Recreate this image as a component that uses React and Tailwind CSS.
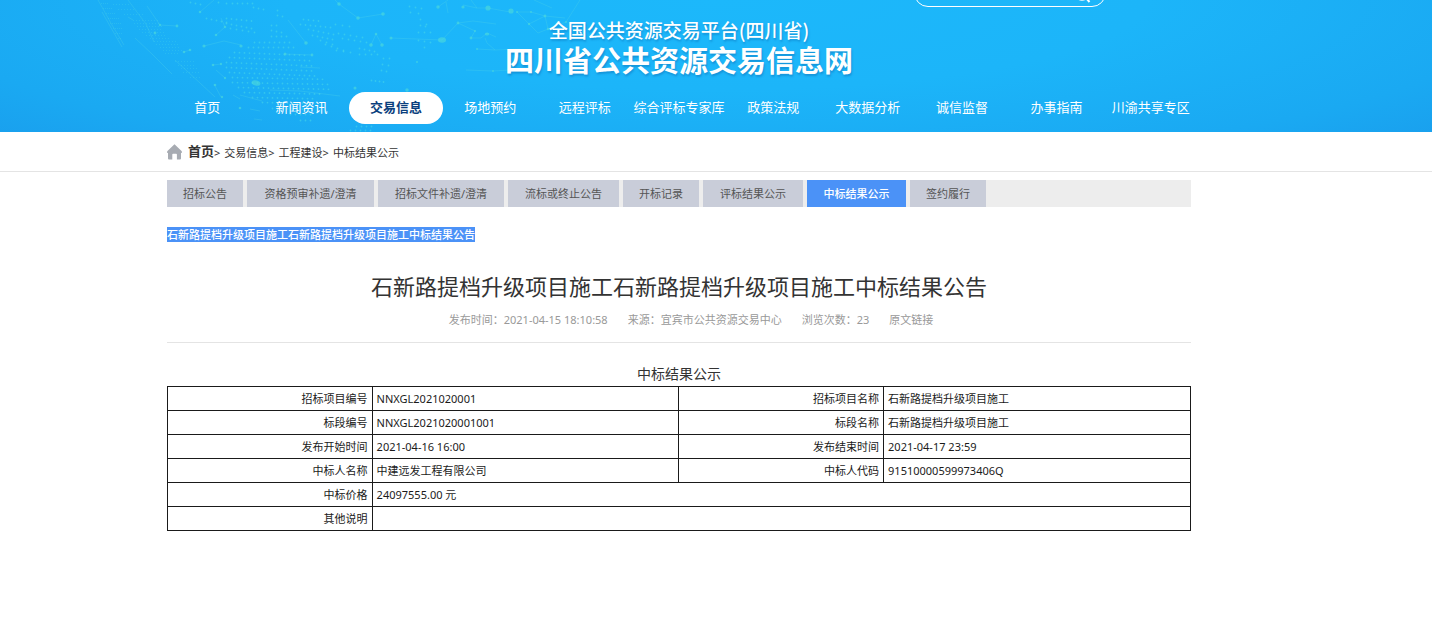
import React from "react";

const FONT = "font-['Noto_Sans','Noto_Sans_CJK_SC',sans-serif]";

const NAV = [
  "首页",
  "新闻资讯",
  "交易信息",
  "场地预约",
  "远程评标",
  "综合评标专家库",
  "政策法规",
  "大数据分析",
  "诚信监督",
  "办事指南",
  "川渝共享专区",
];

const TABS = [
  { label: "招标公告", width: "min-w-[76px]" },
  { label: "资格预审补遗/澄清", width: "min-w-[127px]" },
  { label: "招标文件补遗/澄清", width: "min-w-[126px]" },
  { label: "流标或终止公告", width: "min-w-[111px]" },
  { label: "开标记录", width: "min-w-[76px]" },
  { label: "评标结果公示", width: "min-w-[100px]" },
  { label: "中标结果公示", width: "min-w-[99px]", active: true },
  { label: "签约履行", width: "min-w-[76px]" },
];

const ROWS = [
  ["招标项目编号", "NNXGL2021020001", "招标项目名称", "石新路提档升级项目施工"],
  ["标段编号", "NNXGL2021020001001", "标段名称", "石新路提档升级项目施工"],
  ["发布开始时间", "2021-04-16 16:00", "发布结束时间", "2021-04-17 23:59"],
  ["中标人名称", "中建远发工程有限公司", "中标人代码", "91510000599973406Q"],
  ["中标价格", "24097555.00 元"],
  ["其他说明", ""],
];

/* Rows of evenly spaced dots: [startX, y, count, stepX, stepY] */
const DOT_ROWS = [
  [190, 2, 3, 5, 1],
  [218, 2, 2, 8, 1],
  [232, 3, 5, 5, 0],
  [253, 7, 3, 5, 1],
  [206, 18, 5, 5, 1],
  [226, 18, 6, 5, 0.5],
  [226, 23, 6, 5, 1],
  [230, 28, 5, 6, 1],
  [303, 19, 4, 5, 0.5],
  [300, 24, 7, 5, 0.5],
  [308, 29, 6, 5, 1],
  [312, 35, 5, 5, 1],
  [320, 40, 3, 6, 2],
  [335, 24, 3, 7, 1],
  [338, 33, 5, 6, 1],
  [342, 38, 5, 6, 1],
  [325, 44, 4, 6, 2],
  [336, 50, 3, 7, 1],
  [359, 48, 4, 5, 1],
  [359, 54, 4, 6, 0],
  [383, 58, 2, 6, 0],
  [382, 64, 2, 6, 1],
  [381, 70, 2, 5, 1],
  [371, 80, 4, 4, 0.5],
  [409, 6, 3, 6, 1],
  [410, 12, 2, 8, 1],
  [420, 19, 2, 6, 5],
  [420, 25, 2, 5, 1],
  [418, 32, 3, 6, 0],
  [418, 40, 3, 6, 1],
  [424, 47, 1, 5, 0],
  [277, 10, 1, 5, 0],
  [277, 15, 2, 5, 1],
  [271, 25, 2, 5, 0],
  [271, 30, 3, 5, 1],
  [271, 36, 4, 5, 0],
  [254, 42, 8, 5, 0],
  [248, 47, 10, 5, 0],
  [234, 52, 15, 5, 0.2],
  [229, 57, 17, 5, 0.2],
  [226, 62, 18, 5, 0.2],
  [226, 67, 18, 5, 0.2],
  [229, 72, 18, 5, 0.2],
  [232, 77, 19, 5, 0.1],
  [232, 82, 20, 5, 0.1],
  [238, 87, 19, 5, 0.1],
  [244, 92, 16, 5, 0.1],
  [252, 97, 13, 5, 0.1],
  [262, 102, 10, 5, 0.1],
  [272, 108, 8, 5, 0.1],
  [290, 114, 5, 5, 0],
  [300, 120, 3, 5, 0],
  [356, 126, 4, 5, 0],
  [350, 130, 5, 5, 0],
];

const FINE_ROWS = [
  [101, 3, 4, 2], [103, 8, 5, 2], [106, 13, 5, 2], [108, 18, 6, 2], [110, 23, 6, 2],
  [113, 28, 5, 2], [115, 33, 4, 2], [118, 38, 2, 2],
  [113, 4, 6, 3], [118, 9, 6, 3], [124, 14, 7, 3],
  [133, 20, 9, 3], [134, 23, 9, 3], [137, 26, 9, 3], [139, 29, 8, 3], [142, 32, 8, 3],
  [146, 35, 7, 3], [150, 38, 7, 3], [154, 41, 8, 3], [156, 44, 8, 3], [160, 47, 7, 3],
  [163, 50, 7, 3], [165, 53, 5, 3], [175, 61, 7, 3], [178, 65, 6, 3], [181, 68, 6, 3],
  [183, 72, 6, 3], [190, 77, 4, 3],
];

const LINKS = [
  "M128 17L133 20M147 6L160 25L177 26",
  "M200 12L214 0M216 35L225 27L221 18",
  "M204 46L224 41L241 45M184 52L190 50",
  "M213 65L221 64M216 70L225 78M214 84L221 97",
  "M288 20L306 43M285 54L312 55M300 67L320 68",
  "M335 0L339 4L358 18L383 14",
  "M371 45L376 34L382 45M391 38L442 40L458 23L473 21L496 24M458 23L475 31L471 38L481 38L487 33L496 37",
  "M438 7L448 0M446 2L448 13M463 5L477 8L488 8M471 0L477 8M488 8L510 12",
  "M517 12L531 12L545 16L565 18M517 12L529 24L545 16L548 29L566 22L580 0M548 29L538 33L529 24M534 0L552 8",
  "M477 49L495 50L520 49M485 38L487 43L495 50M466 70L493 71L510 70",
  "M135 38L152 54L172 74M175 60L200 83L215 97M102 12L122 47",
  "M270 90L300 91L340 96M240 95L262 101M250 109L260 111M254 119L262 120M233 95L240 99",
  "M98 0L112 25L124 45M128 0L146 24L154 42",
];

const NODES = [
  [200, 12, 1.3], [160, 25, 1.2], [177, 26, 1.4], [155, 33, 1.4], [216, 35, 1.3], [225, 27, 1.3],
  [204, 46, 1.6], [241, 46, 1.6], [184, 52, 1.3], [190, 50, 1.3], [213, 65, 1.3], [221, 64, 1.2],
  [225, 78, 1.2], [215, 85, 1.3], [222, 97, 1.2], [306, 43, 1.8], [285, 54, 1.5], [312, 55, 1.4],
  [339, 4, 1.8], [358, 18, 1.8], [383, 14, 1.8], [371, 45, 1.8], [376, 34, 1.3], [382, 45, 1.8],
  [391, 38, 1.5], [458, 23, 1.4], [438, 7, 1.7], [471, 38, 1.4], [463, 7, 1.6], [475, 31, 1.1],
  [517, 12, 1], [531, 12, 1], [545, 16, 1.4], [529, 24, 1.2], [548, 29, 1.2], [566, 22, 1.1],
  [493, 71, 1], [477, 49, 1], [417, 62, 1], [240, 108, 1.3], [355, 88, 1.5], [407, 90, 1.7],
];

function NetworkPattern() {
  return (
    <svg
      className="pointer-events-none absolute top-0 left-0"
      width="620"
      height="132"
      viewBox="0 0 620 132"
      aria-hidden="true"
    >
      <g fill="#48d8e8">
        <g fillOpacity="0.55">
          {DOT_ROWS.map(([x, y, n, dx, dy], r) =>
            Array.from({ length: n }, (_, i) => (
              <circle key={`${r}-${i}`} cx={x + i * dx + 0.5} cy={y + i * dy + 0.5} r="0.9" />
            )),
          )}
        </g>
        <g fillOpacity="0.28">
          {FINE_ROWS.map(([x, y, n, dx], r) =>
            Array.from({ length: n }, (_, i) => (
              <rect key={`${r}-${i}`} x={x + i * dx} y={y} width="1" height="1" />
            )),
          )}
        </g>
      </g>
      <g fill="none" stroke="#52d6e6" strokeOpacity="0.35" strokeWidth="0.8">
        {LINKS.map((d) => (
          <path key={d} d={d} />
        ))}
      </g>
      <g fill="#4bd8dc" fillOpacity="0.65">
        {NODES.map(([x, y, r]) => (
          <circle key={`${x}-${y}`} cx={x} cy={y} r={r} />
        ))}
        <ellipse cx="256" cy="83" rx="4.5" ry="2.5" transform="rotate(15 256 83)" />
        <ellipse cx="442" cy="40" rx="4" ry="2.8" />
        <circle cx="488" cy="8" r="2.6" />
        <circle cx="511" cy="11" r="2.6" />
        <ellipse cx="487" cy="34" rx="2.2" ry="1.6" />
      </g>
    </svg>
  );
}

function Header() {
  return (
    <header className="relative overflow-hidden bg-[radial-gradient(ellipse_75%_170%_at_50%_0%,#1cb8fb_0%,#1cb5f9_40%,#1aa9f2_75%,#199aeb_100%)] pr-[74px]">
      <NetworkPattern />
      <div className="relative mx-auto max-w-[1038px]">
        <div className="flex h-[7px] items-end justify-end overflow-hidden pr-[92px]">
          <form className="flex h-7 w-48 shrink-0 items-center rounded-full border border-white px-3" role="search">
            <input type="search" aria-label="搜索" className="min-w-0 flex-1 bg-transparent text-xs text-white outline-none" />
            <button type="submit" aria-label="搜索" className="h-6 text-white">
              <svg width="18" height="24" viewBox="0 0 18 24" fill="none" stroke="currentColor" strokeWidth="1.6">
                <circle cx="7" cy="12" r="7" />
                <path d="M11.5 17.5L14.5 21" strokeWidth="2" />
              </svg>
            </button>
          </form>
        </div>
        <div className="flex flex-col items-center pt-[11px] text-white [text-shadow:1px_2px_2px_rgba(10,90,160,0.35)]">
          <p className="font-['Noto_Sans_CJK_SC',sans-serif] text-[19px] leading-6 font-medium">
            全国公共资源交易平台(四川省)
          </p>
          <h1 className="font-['Noto_Sans_CJK_SC',sans-serif] text-[29px] leading-[34px] font-bold">
            四川省公共资源交易信息网
          </h1>
        </div>
        <nav className="mt-4 pb-2">
          <ul className="grid grid-cols-11">
            {NAV.map((item) => (
              <li key={item}>
                <a
                  href="#"
                  className={
                    item === "交易信息"
                      ? "flex h-8 items-center justify-center rounded-full bg-white text-[13px] font-bold whitespace-nowrap text-[#0b3f7d]"
                      : "flex h-8 items-center justify-center text-[13px] whitespace-nowrap text-white"
                  }
                >
                  {item}
                </a>
              </li>
            ))}
          </ul>
        </nav>
      </div>
    </header>
  );
}

function Breadcrumb() {
  return (
    <div className="border-b border-[#e4e4e4] pr-[74px]">
      <nav className="mx-auto flex h-[39px] max-w-[1024px] items-center text-[11px] text-[#333]" aria-label="面包屑">
        <svg width="15" height="16" viewBox="0 0 15 16" fill="#a7abb2" className="mr-1.5" aria-hidden="true">
          <path d="M7.5 0.3L14.8 7.2V9H14V14.6Q14 15.5 13 15.5H9.9V10.6Q9.9 9.8 9.1 9.8H6.1Q5.3 9.8 5.3 10.6V15.5H2Q1 15.5 1 14.6V9H0.2V7.2Z" />
        </svg>
        <a href="#" className="text-[13px] font-bold">首页</a>
        <div className="flex items-center gap-1 pt-1">
          <span>&gt;</span>
          <a href="#">交易信息&gt;</a>
          <a href="#">工程建设&gt;</a>
          <a href="#">中标结果公示</a>
        </div>
      </nav>
    </div>
  );
}

function Tabs() {
  return (
    <ul className="mt-2 flex gap-1 bg-[#ededed]">
      {TABS.map(({ label, width, active }) => (
        <li key={label} className={width}>
          <a
            href="#"
            className={
              active
                ? "flex h-[27px] items-center justify-center bg-[#4b92f7] pt-0.5 text-[11px] font-medium whitespace-nowrap text-white"
                : "flex h-[27px] items-center justify-center bg-[#c9cdd9] pt-0.5 text-[11px] whitespace-nowrap text-[#555]"
            }
          >
            {label}
          </a>
        </li>
      ))}
    </ul>
  );
}

function ResultTable() {
  const label = "border border-[#1a1a1a] px-1 text-right font-normal";
  const value = "border border-[#1a1a1a] px-1 text-left";
  return (
    <table className="w-full table-fixed border-collapse text-[11px] leading-4 text-[#1a1a1a]">
      <caption className="pt-0.5 text-sm leading-6 text-[#333]">中标结果公示</caption>
      <colgroup>
        <col className="w-1/5" />
        <col className="w-3/10" />
        <col className="w-1/5" />
        <col className="w-3/10" />
      </colgroup>
      <tbody>
        {ROWS.map((row) => (
          <tr key={row[0]} className="h-6">
            <th scope="row" className={label}>{row[0]}</th>
            {row.length === 2 ? (
              <td colSpan={3} className={value}>{row[1]}</td>
            ) : (
              <>
                <td className={value}>{row[1]}</td>
                <th scope="row" className={label}>{row[2]}</th>
                <td className={value}>{row[3]}</td>
              </>
            )}
          </tr>
        ))}
      </tbody>
    </table>
  );
}

export default function App() {
  return (
    <div className={`min-h-screen bg-white ${FONT}`}>
      <Header />
      <Breadcrumb />
      <main className="pr-[74px] pb-8">
        <div className="mx-auto max-w-[1024px]">
          <Tabs />
          <p className="mt-5 flex">
            <span className="bg-[#4b92f7] text-[11px] leading-[15px] font-medium text-white">
              石新路提档升级项目施工石新路提档升级项目施工中标结果公告
            </span>
          </p>
          <article>
            <h2 className="mt-7 text-center text-[22px] leading-8 text-[#333]">
              石新路提档升级项目施工石新路提档升级项目施工中标结果公告
            </h2>
            <div className="flex justify-center gap-5 border-b border-[#e4e4e4] pt-2.5 pb-3.5 pl-6 text-[11px] leading-4 text-[#999]">
              <span>发布时间：2021-04-15 18:10:58</span>
              <span>来源：宜宾市公共资源交易中心</span>
              <span>浏览次数：23</span>
              <a href="#">原文链接</a>
            </div>
            <div className="mt-[17px]">
              <ResultTable />
            </div>
          </article>
        </div>
      </main>
    </div>
  );
}
